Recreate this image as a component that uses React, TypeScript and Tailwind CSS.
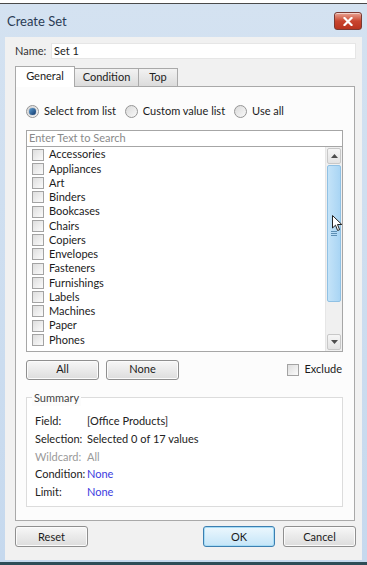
import { useState } from 'react';

const ITEMS = [
  'Accessories',
  'Appliances',
  'Art',
  'Binders',
  'Bookcases',
  'Chairs',
  'Copiers',
  'Envelopes',
  'Fasteners',
  'Furnishings',
  'Labels',
  'Machines',
  'Paper',
  'Phones',
];

export default function App() {
  const [mode, setMode] = useState('list');

  return (
    <div
      className="flex h-[565px] w-[367px] flex-col overflow-hidden bg-white text-[11px] text-[#1b1b1b]"
      style={{ fontFamily: 'Lato, "Liberation Sans", sans-serif' }}
    >
      <div className="h-[3px] bg-white" />
      <div className="h-px bg-[#4a4a4a]" />

      {/* window frame */}
      <div className="flex flex-1 flex-col bg-gradient-to-b from-[#d4e2f1] to-[#c6d9ee] px-[5px]">
        <div className="flex h-[33px] shrink-0 items-center justify-between">
          <span className="pl-[2px] pt-[3px] text-[13px] text-[#2a3c55]">Create Set</span>
          <CloseButton />
        </div>

        <div className="flex flex-1 flex-col bg-[#f1f1f1]">
          {/* name */}
          <div className="flex items-center pl-[10px] pr-[6px] pt-[6px]">
            <span className="w-[36px] text-[#333]">Name:</span>
            <div className="flex h-[16px] flex-1 items-center border border-[#e6e6e6] bg-white pl-[2px]">
              Set 1
            </div>
          </div>

          {/* tabs */}
          <div className="mt-[6px] flex items-end pl-[10px]">
            <div className="-mb-px z-10 flex h-[21px] w-[60px] items-center justify-center border border-b-0 border-[#a9a9a9] bg-white">
              General
            </div>
            <Tab label="Condition" w="w-[64px]" />
            <Tab label="Top" w="w-[39px]" />
          </div>

          <div className="ml-[10px] mr-[7px] flex flex-col border border-[#a9a9a9] bg-[#fcfcfc] px-[10px] pb-[13px]">
            <div className="flex h-[43px] items-center gap-[9px] pt-[7px]">
              <Radio on={mode === 'list'} onClick={() => setMode('list')} label="Select from list" />
              <Radio on={mode === 'custom'} onClick={() => setMode('custom')} label="Custom value list" />
              <Radio on={mode === 'all'} onClick={() => setMode('all')} label="Use all" />
            </div>

            <div className="mr-px flex h-[17px] items-center border border-[#a6a6a6] bg-white pl-[2px] text-[#8a8a8a]">
              Enter Text to Search
            </div>
            <div className="relative mr-px flex h-[205px] border border-t-0 border-[#a6a6a6] bg-white">
              <div className="flex flex-1 flex-col pl-[5px] pt-px">
                {ITEMS.map((item) => (
                  <div key={item} className="flex h-[14.25px] items-center gap-[5px]">
                    <Check />
                    <span>{item}</span>
                  </div>
                ))}
              </div>
              <Scrollbar />
              <Cursor />
            </div>

            <div className="mt-[8px] flex items-center">
              <Button label="All" w="w-[73px]" />
              <Button label="None" w="w-[73px]" className="ml-[7px]" />
              <div className="ml-auto mr-[2px] flex items-center gap-[5px]">
                <Check />
                <span>Exclude</span>
              </div>
            </div>

            <div className="relative mr-px mt-[17px] border border-[#dcdcdc] bg-white px-[8px] pb-[5px] pt-[15px]">
              <span className="absolute -top-[8px] left-[5px] bg-[#fcfcfc] px-[2px] text-[#444]">Summary</span>
              <SummaryRow label="Field:" value="[Office Products]" />
              <SummaryRow label="Selection:" value="Selected 0 of 17 values" />
              <SummaryRow label="Wildcard:" value="All" dim />
              <SummaryRow label="Condition:" value="None" link />
              <SummaryRow label="Limit:" value="None" link />
            </div>
          </div>

          <div className="mt-[5px] flex items-center pl-[10px] pr-[6px]">
            <Button label="Reset" w="w-[73px]" h="h-[21px]" />
            <Button label="OK" w="w-[72px]" h="h-[21px]" primary className="ml-auto" />
            <Button label="Cancel" w="w-[73px]" h="h-[21px]" className="ml-[8px]" />
          </div>
        </div>
        <div className="h-[2px]" />
      </div>
      <div className="h-[3px] bg-[#2e4d57]" />
    </div>
  );
}

function CloseButton() {
  return (
    <div className="mt-px flex h-[18px] w-[28px] items-center justify-center rounded-[3px] border border-[#7a3a33] bg-gradient-to-b from-[#e8a394] via-[#c9452f] to-[#b9341f] shadow-[inset_0_1px_0_rgba(255,255,255,0.5)]">
      <svg width="10" height="9" viewBox="0 0 10 9" aria-hidden>
        <path d="M1.5 1 L8.5 8 M8.5 1 L1.5 8" stroke="white" strokeWidth="2.2" strokeLinecap="square" />
      </svg>
    </div>
  );
}

function Tab({ label, w }: { label: string; w: string }) {
  return (
    <div
      className={`flex h-[18px] ${w} items-center justify-center border border-b-0 border-l-0 border-[#a9a9a9] bg-gradient-to-b from-[#f2f2f2] to-[#dcdcdc] text-[#222]`}
    >
      {label}
    </div>
  );
}

function Radio({
  on,
  label,
  onClick,
}: {
  on: boolean;
  label: string;
  onClick: () => void;
}) {
  return (
    <button type="button" onClick={onClick} className="flex items-center gap-[5px]">
      <span className="flex h-[13px] w-[13px] items-center justify-center rounded-full border border-[#959595] bg-gradient-to-br from-[#d9d9d9] to-[#fafafa]">
        {on ? (
          <span className="h-[7px] w-[7px] rounded-full bg-gradient-to-br from-[#5fa2d5] to-[#13376b] shadow-[0_0_1px_#0e2a4d]" />
        ) : null}
      </span>
      <span>{label}</span>
    </button>
  );
}

function Check() {
  return (
    <span className="h-[12px] w-[12px] shrink-0 border border-[#a3a3a3] bg-gradient-to-br from-[#dedede] to-[#fbfbfb]" />
  );
}

function Scrollbar() {
  return (
    <div className="flex w-[17px] flex-col border-l border-[#e6e6e6] bg-[#f0f0f0] px-px py-px">
      <div className="flex h-[16px] items-center justify-center rounded-[2px] border border-[#c8c8c8] bg-gradient-to-b from-[#f6f6f6] to-[#e3e3e3]">
        <svg width="7" height="4" viewBox="0 0 7 4" aria-hidden>
          <path d="M0 4 L3.5 0 L7 4 Z" fill="#4d4d4d" />
        </svg>
      </div>
      <div className="mt-px flex h-[137px] flex-col items-center justify-center gap-px rounded-[2px] border border-[#90c1e4] bg-gradient-to-r from-[#c4e3f8] to-[#a9d5f4]">
        <span className="h-px w-[6px] bg-[#5d8fb4]" />
        <span className="h-px w-[6px] bg-[#5d8fb4]" />
        <span className="h-px w-[6px] bg-[#5d8fb4]" />
      </div>
      <div className="flex-1" />
      <div className="flex h-[16px] items-center justify-center rounded-[2px] border border-[#c8c8c8] bg-gradient-to-b from-[#f6f6f6] to-[#e3e3e3]">
        <svg width="7" height="4" viewBox="0 0 7 4" aria-hidden>
          <path d="M0 0 L7 0 L3.5 4 Z" fill="#4d4d4d" />
        </svg>
      </div>
    </div>
  );
}

function Cursor() {
  return (
    <svg
      className="absolute left-[305px] top-[68px]"
      width="11"
      height="17"
      viewBox="0 0 11 17"
      aria-hidden
    >
      <path d="M0.5 0.5 L0.5 13 L3.5 10.2 L5.6 15.5 L7.6 14.7 L5.5 9.5 L9.8 9.5 Z" fill="white" stroke="#222" strokeWidth="1" strokeLinejoin="round" />
    </svg>
  );
}

function Button({
  label,
  w,
  h = 'h-[20px]',
  primary = false,
  className = '',
}: {
  label: string;
  w: string;
  h?: string;
  primary?: boolean;
  className?: string;
}) {
  return (
    <button
      type="button"
      className={`flex ${h} ${w} items-center justify-center rounded-[3px] border ${
        primary
          ? 'border-[#3c7fb1] bg-gradient-to-b from-[#ecf7fd] to-[#c4e5f8] shadow-[inset_0_0_0_1px_#a7dcf5]'
          : 'border-[#8f8f8f] bg-gradient-to-b from-[#f7f7f7] to-[#dddddd] shadow-[inset_0_0_0_1px_#fbfbfb]'
      } ${className}`}
    >
      {label}
    </button>
  );
}

function SummaryRow({
  label,
  value,
  dim = false,
  link = false,
}: {
  label: string;
  value: string;
  dim?: boolean;
  link?: boolean;
}) {
  return (
    <div className={`flex h-[17.75px] items-center ${dim ? 'text-[#9a9a9a]' : 'text-[#222]'}`}>
      <span className="w-[52px]">{label}</span>
      <span className={link ? 'text-[#3c3ce0]' : ''}>{value}</span>
    </div>
  );
}
